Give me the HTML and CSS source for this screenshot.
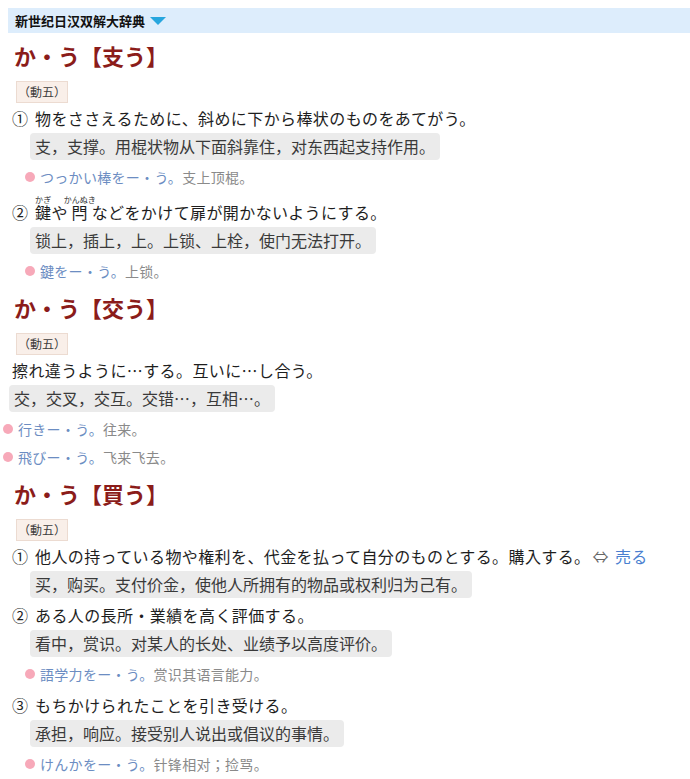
FILE: index.html
```html
<!DOCTYPE html>
<html lang="ja">
<head>
<meta charset="utf-8">
<title>新世纪日汉双解大辞典</title>
<link rel="stylesheet" href="styles.css">
</head>
<body>
<div class="dict-bar"><span class="dict-name">新世纪日汉双解大辞典</span><span class="tri"></span></div>

<div class="entry">
  <h2 class="hw">か・う【支う】</h2>
  <div class="pos-row"><span class="pos">（動五）</span></div>
  <div class="sense num">
    <div class="def"><span class="no">①</span>物をささえるために、斜めに下から棒状のものをあてがう。</div>
    <div class="tr-row"><span class="tr">支，支撑。用棍状物从下面斜靠住，对东西起支持作用。</span></div>
    <div class="ex"><span class="dot"></span><span class="jp">つっかい棒をー・う。</span><span class="zh">支上顶棍。</span></div>
  </div>
  <div class="sense num s-ruby">
    <div class="def"><span class="no">②</span><ruby>鍵<rt>かぎ</rt></ruby>や<ruby>閂<rt>かんぬき</rt></ruby>などをかけて扉が開かないようにする。</div>
    <div class="tr-row"><span class="tr">锁上，插上，上。上锁、上栓，使门无法打开。</span></div>
    <div class="ex"><span class="dot"></span><span class="jp">鍵をー・う。</span><span class="zh">上锁。</span></div>
  </div>
</div>

<div class="entry">
  <h2 class="hw">か・う【交う】</h2>
  <div class="pos-row"><span class="pos">（動五）</span></div>
  <div class="sense plain">
    <div class="def">擦れ違うように…する。互いに…し合う。</div>
    <div class="tr-row"><span class="tr">交，交叉，交互。交错…，互相…。</span></div>
    <div class="ex"><span class="dot"></span><span class="jp">行きー・う。</span><span class="zh">往来。</span></div>
    <div class="ex ex-next"><span class="dot"></span><span class="jp">飛びー・う。</span><span class="zh">飞来飞去。</span></div>
  </div>
</div>

<div class="entry">
  <h2 class="hw">か・う【買う】</h2>
  <div class="pos-row"><span class="pos">（動五）</span></div>
  <div class="sense num">
    <div class="def"><span class="no">①</span>他人の持っている物や権利を、代金を払って自分のものとする。購入する。<span class="ant">⇔</span><span class="ref">売る</span></div>
    <div class="tr-row"><span class="tr">买，购买。支付价金，使他人所拥有的物品或权利归为己有。</span></div>
  </div>
  <div class="sense num">
    <div class="def"><span class="no">②</span>ある人の長所・業績を高く評価する。</div>
    <div class="tr-row"><span class="tr">看中，赏识。对某人的长处、业绩予以高度评价。</span></div>
    <div class="ex"><span class="dot"></span><span class="jp">語学力をー・う。</span><span class="zh">赏识其语言能力。</span></div>
  </div>
  <div class="sense num">
    <div class="def"><span class="no">③</span>もちかけられたことを引き受ける。</div>
    <div class="tr-row"><span class="tr">承担，响应。接受别人说出或倡议的事情。</span></div>
    <div class="ex"><span class="dot"></span><span class="jp">けんかをー・う。</span><span class="zh">针锋相对；捡骂。</span></div>
  </div>
</div>
</body>
</html>
```

FILE: styles.css
```css
html, body {
  margin: 0;
  padding: 0;
  background: #ffffff;
}
body {
  font-family: "Noto Sans CJK JP", "Noto Sans CJK SC", sans-serif;
  color: #222222;
  width: 690px;
  overflow: hidden;
}
.dict-bar {
  margin: 8px 0 0 8px;
  height: 25px;
  background: #ddedfc;
  display: flex;
  align-items: center;
  padding-left: 7px;
}
.dict-name {
  font-family: "Noto Sans CJK SC", sans-serif;
  font-weight: 700;
  font-size: 13px;
  color: #111111;
  line-height: 25px;
}
.tri {
  width: 0;
  height: 0;
  margin-left: 5px;
  border-left: 8px solid transparent;
  border-right: 8px solid transparent;
  border-top: 8px solid #27a6de;
}
.hw {
  margin: 7px 0 0 0;
  padding-left: 14px;
  font-size: 22px;
  line-height: 30px;
  font-weight: 700;
  color: #8b1c1a;
}
.entry:first-of-type .hw {
  margin-top: 10px;
}
.pos-row {
  display: flex;
  margin-top: 11px;
  padding-left: 16px;
}
.pos {
  display: inline-block;
  font-size: 12px;
  line-height: 20px;
  padding: 0 1px;
  background: #f9efe9;
  border: 1px solid #ecdbd1;
  color: #3c3c3c;
}
.def {
  margin-top: 2px;
  padding-left: 12px;
  font-size: 16px;
  line-height: 26px;
  letter-spacing: 0.4px;
  color: #1e1e1e;
  white-space: nowrap;
}
.no {
  display: inline-block;
  width: 23px;
  letter-spacing: 0;
}
.s-ruby .def {
  margin-top: 6px;
}
ruby rt {
  font-size: 8px;
  line-height: 1;
  letter-spacing: 0;
  color: #333333;
}
.ant {
  color: #666666;
  margin: 0 6px 0 2px;
}
.ref {
  color: #4a7fd0;
}
.tr-row {
  display: flex;
  margin-top: 2px;
}
.num .tr-row {
  padding-left: 30px;
}
.plain .tr-row {
  padding-left: 9px;
}
.tr {
  display: inline-block;
  font-family: "Noto Sans CJK SC", sans-serif;
  font-size: 16px;
  line-height: 27px;
  padding: 0 5px;
  background: #ebebeb;
  border-radius: 4px;
  color: #3a3a3a;
}
.num + .num .def {
  margin-top: 4px;
}
.ex {
  display: flex;
  align-items: center;
  margin-top: 3px;
  height: 28px;
  font-size: 14px;
  letter-spacing: 0.3px;
  white-space: nowrap;
}
.ex-next {
  margin-top: 0;
}
.num .ex {
  padding-left: 25px;
}
.plain .ex {
  padding-left: 3px;
}
.dot {
  width: 10px;
  height: 10px;
  border-radius: 50%;
  background: #f7a9b9;
  margin-right: 5px;
  flex: none;
}
.jp {
  color: #6c8dc2;
}
.zh {
  font-family: "Noto Sans CJK SC", sans-serif;
  color: #8a8a8a;
}
```
